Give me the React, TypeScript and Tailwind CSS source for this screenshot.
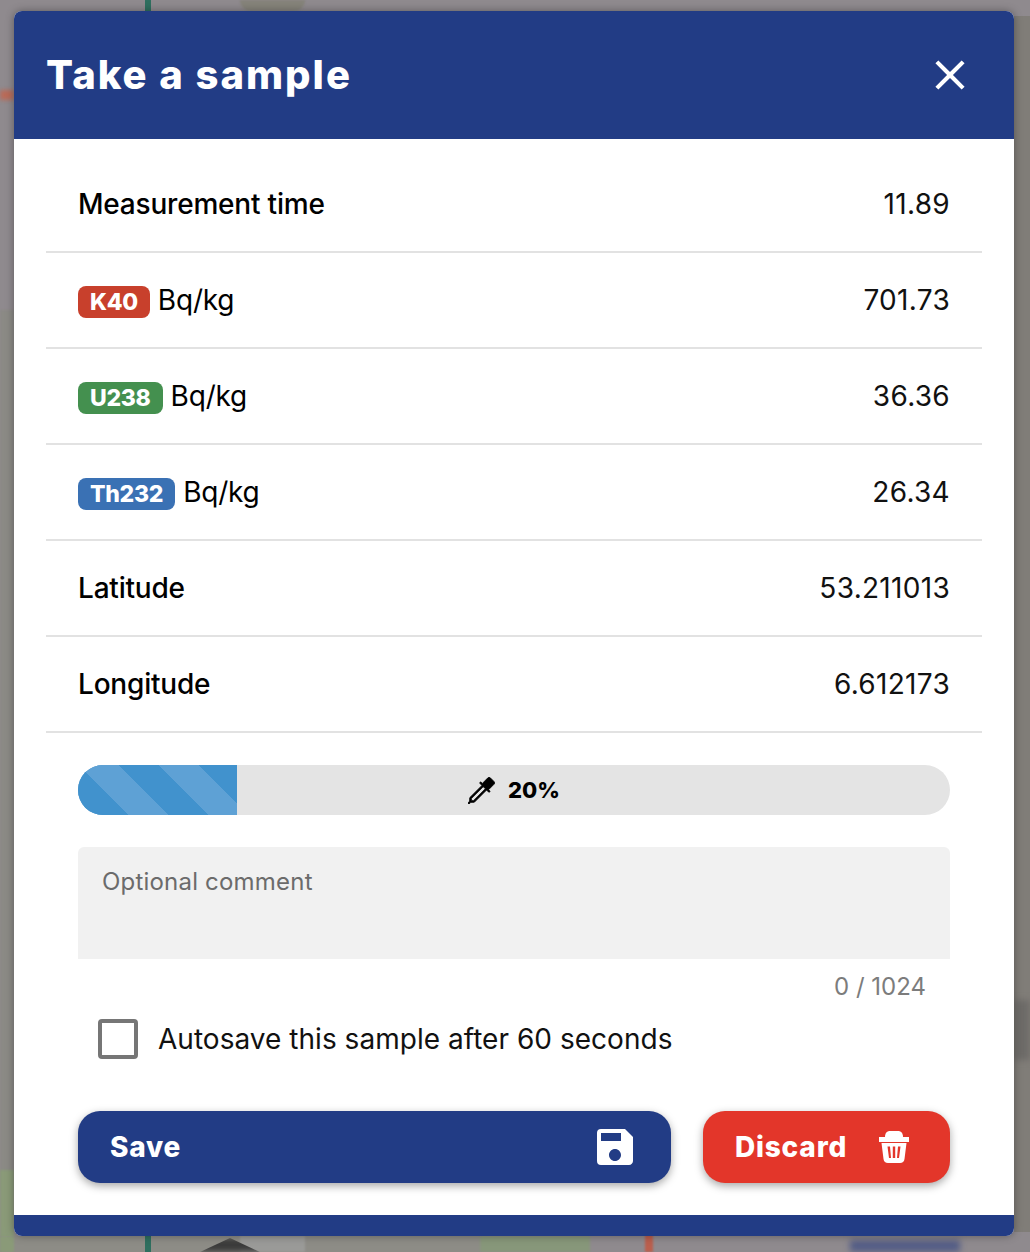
import { BsEyedropper } from "react-icons/bs";
import { MdSave, MdClose } from "react-icons/md";

const INTER = "font-['Inter',sans-serif]";
const HEAD = "font-['Inter',sans-serif] font-extrabold";

function Row({ label, value }: { label: React.ReactNode; value: string }) {
  return (
    <div className="flex h-[96px] items-center justify-between border-b-2 border-[#e2e2e2] px-8 text-[28px] tracking-[-0.2px]">
      <div className="flex items-center">{label}</div>
      <div className="text-[#111] tracking-[0.3px]">{value}</div>
    </div>
  );
}

function Badge({ text, color }: { text: string; color: string }) {
  return (
    <span className={`relative top-[2px] mr-2 inline-flex h-8 items-center rounded-lg px-3 text-[23px] font-extrabold tracking-[-0.3px] text-white ${color}`}>
      {text}
    </span>
  );
}

function TrashIcon() {
  return (
    <svg width="30" height="32" viewBox="0 0 30 32" fill="currentColor">
      <path d="M6 6 C6 2 8 0 11 0 H19 C22 0 24 2 24 6 Z" />
      <rect x="0" y="6" width="30" height="5" />
      <path
        fillRule="evenodd"
        d="M2.5 12 H27.5 L25.5 28 C25.2 30.5 23.5 32 21 32 H9 C6.5 32 4.8 30.5 4.5 28 Z M8.5 15.5 L10 27 H12 L11 15.5 Z M13.8 15.5 V27 H16.2 V15.5 Z M19 15.5 L18 27 H20 L21.5 15.5 Z"
      />
    </svg>
  );
}

// blurred map that sits behind the dialog
function MapBackdrop() {
  return (
    <div className="absolute inset-0 overflow-hidden bg-[#8f8a8e]">
      <div className="absolute right-0 top-[16px] h-[1216px] w-[16px] bg-[#807d78]" />
      <div className="absolute left-0 top-[310px] h-[880px] w-[14px] bg-[#8b8a85] blur-[1px]" />
      <div className="absolute left-0 top-[1170px] h-[82px] w-[14px] bg-[#8a9a78] blur-[1px]" />
      <div className="absolute bottom-0 left-0 h-[16px] w-[480px] bg-[#8d8c86]" />
      <div className="absolute bottom-0 left-0 h-[16px] w-[14px] bg-[#8a9a78] blur-[1px]" />
      <div className="absolute bottom-0 left-[240px] h-[16px] w-[65px] bg-[#9a9a98] blur-[1px]" />
      <div className="absolute bottom-0 left-[480px] h-[16px] w-[110px] bg-[#87977a] blur-[1px]" />
      <div className="absolute bottom-0 left-[200px] h-[14px] w-[60px] bg-[#3a3a3a] blur-[3px] [clip-path:polygon(50%_0,100%_100%,0_100%)]" />
      <div className="absolute bottom-0 left-[645px] h-[18px] w-[8px] bg-[#bb5f4d] blur-[1px]" />
      <div className="absolute bottom-0 left-[850px] h-[12px] w-[110px] bg-[#545d86] blur-[3px]" />
      <div className="absolute left-[240px] top-0 h-[11px] w-[65px] rounded-b-full bg-[#85837a] blur-[1px]" />
      <div className="absolute left-0 top-[90px] h-[10px] w-[14px] bg-[#b96a58] blur-[2px]" />
      <div className="absolute right-0 top-[1000px] h-[60px] w-[16px] bg-[#6d6b68] blur-[3px]" />
      <div className="absolute left-[145px] top-0 h-[1252px] w-[6px] bg-[#2f6f5f]" />
    </div>
  );
}

export default function App() {
  return (
    <div className={`relative h-[1252px] w-[1030px] overflow-hidden pt-[11px] pl-[14px] ${INTER}`}>
      <MapBackdrop />
      <div className="relative flex h-[1225px] w-[1000px] flex-col overflow-hidden rounded-lg bg-white shadow-[0_0_8px_rgba(0,0,0,0.35)]">
        <div className="flex h-[128px] shrink-0 items-center justify-between bg-[#223c85] pl-8 pr-[39px]">
          <h1 className={`text-[40px] tracking-[2px] text-white ${HEAD}`}>Take a sample</h1>
          <MdClose className="text-white" size={50} />
        </div>
        <div className="flex flex-1 flex-col px-8 text-black">
          <div className="pt-[18px]">
            <Row label={<span className="font-medium">Measurement time</span>} value="11.89" />
          </div>
          <Row label={<><Badge text="K40" color="bg-[#c8402c]" />Bq/kg</>} value="701.73" />
          <Row label={<><Badge text="U238" color="bg-[#44904f]" />Bq/kg</>} value="36.36" />
          <Row label={<><Badge text="Th232" color="bg-[#3a71b4]" />Bq/kg</>} value="26.34" />
          <Row label={<span className="font-medium">Latitude</span>} value="53.211013" />
          <Row label={<span className="font-medium">Longitude</span>} value="6.612173" />

          <div className="flex flex-col px-8 pt-8">
            <div className="relative flex h-[50px] items-center justify-center overflow-hidden rounded-full bg-[#e4e4e4]">
              <div className="absolute bottom-0 left-0 top-0 w-[159px] bg-[#4192cd] bg-[repeating-linear-gradient(45deg,#5ea1d5_0,#5ea1d5_7.07px,#4192cd_7.07px,#4192cd_35.36px,#5ea1d5_35.36px,#5ea1d5_56.57px)]" />
              <div className="relative flex items-center gap-[13px] text-[22px] font-extrabold">
                <BsEyedropper size={27} stroke="currentColor" strokeWidth={0.5} />
                20%
              </div>
            </div>
            <div className="mt-8 h-[112px] rounded-t-md bg-[#f1f1f1] px-6 py-[20px] text-[24px] leading-[30px] tracking-[0.2px] text-[#6b6b6b]">
              Optional comment
            </div>
            <div className="mt-[12px] pr-6 text-right text-[24px] leading-[32px] text-[#7c7c7c]">0 / 1024</div>
            <div className="mt-[15px] flex items-center gap-[20px] pl-5">
              <div className="h-10 w-10 rounded-[4px] border-[4px] border-[#767676]" />
              <span className="text-[28px] tracking-[0.03px] text-[#111]">Autosave this sample after 60 seconds</span>
            </div>
            <div className="mt-[51px] flex gap-8">
              <div className={`flex h-[72px] flex-1 items-center justify-between rounded-[22px] bg-[#223c85] pl-8 pr-8 text-[28px] tracking-[0.75px] text-white shadow-[0_3px_8px_rgba(0,0,0,0.35)] ${HEAD}`}>
                Save
                <MdSave size={48} />
              </div>
              <div className={`flex h-[72px] w-[247px] items-center justify-between rounded-[22px] bg-[#e3362a] pl-8 pr-[41px] text-[28px] tracking-[0.8px] text-white shadow-[0_3px_8px_rgba(0,0,0,0.35)] ${HEAD}`}>
                Discard
                <TrashIcon />
              </div>
            </div>
          </div>
        </div>
        <div className="h-[21px] shrink-0 bg-[#223c85]" />
      </div>
    </div>
  );
}
